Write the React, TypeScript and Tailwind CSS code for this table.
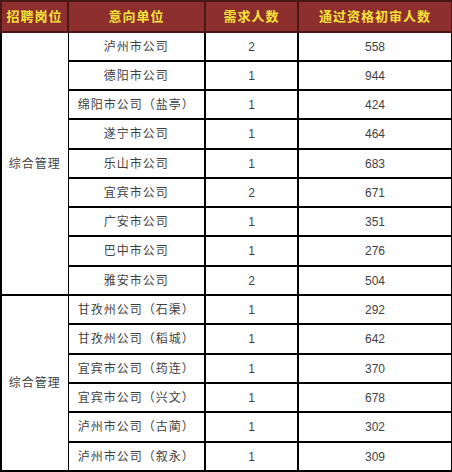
import React from "react"

const groups = [
  [
    ["泸州市公司", "2", "558"],
    ["德阳市公司", "1", "944"],
    ["绵阳市公司（盐亭）", "1", "424"],
    ["遂宁市公司", "1", "464"],
    ["乐山市公司", "1", "683"],
    ["宜宾市公司", "2", "671"],
    ["广安市公司", "1", "351"],
    ["巴中市公司", "1", "276"],
    ["雅安市公司", "2", "504"],
  ],
  [
    ["甘孜州公司（石渠）", "1", "292"],
    ["甘孜州公司（稻城）", "1", "642"],
    ["宜宾市公司（筠连）", "1", "370"],
    ["宜宾市公司（兴文）", "1", "678"],
    ["泸州市公司（古蔺）", "1", "302"],
    ["泸州市公司（叙永）", "1", "309"],
  ],
]

// a couple of rows are 1px taller so the table fills the shot like the original
const tall = [
  [3, 7],
  [1, 4],
]

const headers = ["招聘岗位", "意向单位", "需求人数", "通过资格初审人数"]

export default function App() {
  return (
    <div className="w-[452px] h-[472px] bg-white overflow-hidden">
      <table
        className="table-fixed border-collapse w-[451px] text-[12px] text-[#3f3f3f]"
        style={{ fontFamily: '"Liberation Sans", "Noto Sans CJK SC", sans-serif' }}
      >
        <colgroup>
          <col className="w-[67px]" />
          <col className="w-[137px]" />
          <col className="w-[93px]" />
          <col className="w-[154px]" />
        </colgroup>
        <thead>
          <tr className="h-[31px] bg-[#8e2f2f]">
            {headers.map((h) => (
              <th
                key={h}
                className="border-2 border-[#4a1616] text-[13px] font-bold text-[#f7e23a] tracking-[1px] text-center p-0"
              >
                {h}
              </th>
            ))}
          </tr>
        </thead>
        {groups.map((rows, g) => (
          <tbody key={g}>
            {rows.map((r, i) => (
              <tr key={i} className={tall[g].includes(i) ? "h-[30px]" : "h-[29px]"}>
                {i === 0 && (
                  <td
                    rowSpan={rows.length}
                    className="border-2 border-r border-black text-center tracking-[1px] p-0"
                  >
                    综合管理
                  </td>
                )}
                <td className="border-2 border-l border-black text-center tracking-[1px] p-0">{r[0]}</td>
                <td className="border-2 border-black text-center p-0">{r[1]}</td>
                <td className="border-2 border-black text-center p-0">{r[2]}</td>
              </tr>
            ))}
          </tbody>
        ))}
      </table>
    </div>
  )
}
